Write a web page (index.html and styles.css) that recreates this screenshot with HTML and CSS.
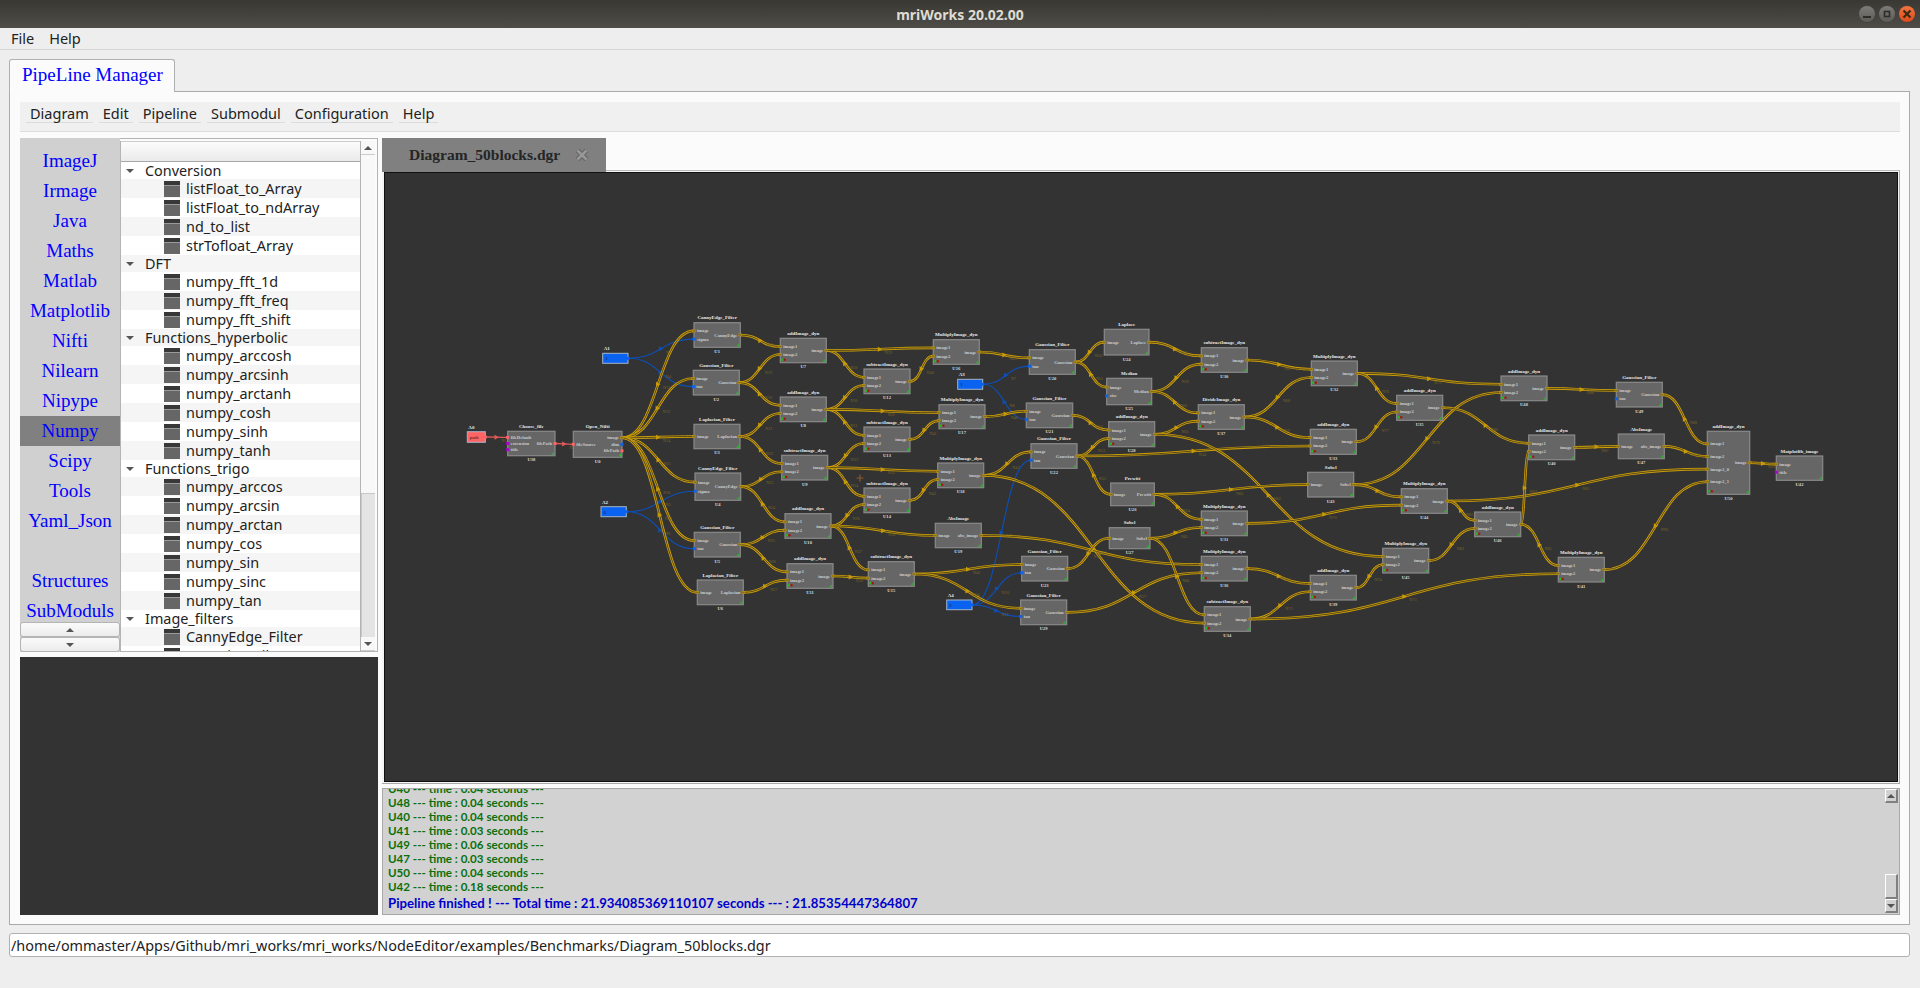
FILE: index.html
```html
<!DOCTYPE html>
<html lang="en">
<head>
    <meta charset="UTF-8">
    <title>mriWorks 20.02.00</title>
    <link rel="stylesheet" href="styles.css">
</head>
<body>
    <header class="titlebar">
        <div class="title">mriWorks 20.02.00</div>
        <div class="win-buttons">
            <span class="win-btn"><svg width="16" height="16" viewBox="0 0 16 16"><path d="M4 11h8" stroke="#2e2d2a" stroke-width="2"/></svg></span>
            <span class="win-btn"><svg width="16" height="16" viewBox="0 0 16 16"><rect x="5.5" y="5.5" width="5" height="5" fill="none" stroke="#2e2d2a" stroke-width="1.6"/></svg></span>
            <span class="win-btn win-close"><svg width="16" height="16" viewBox="0 0 16 16"><path d="M4.5 4.5l7 7M11.5 4.5l-7 7" stroke="#3a2a14" stroke-width="2.2"/></svg></span>
        </div>
    </header>
    <nav class="menubar">
        <span>File</span>
        <span>Help</span>
    </nav>

    <main class="workspace">
        <div class="tab-head">PipeLine Manager</div>
        <section class="tab-panel">
            <div class="toolbar">
                <span>Diagram</span>
                <span>Edit</span>
                <span>Pipeline</span>
                <span>Submodul</span>
                <span>Configuration</span>
                <span>Help</span>
            </div>
            <div class="split">
                <div class="left-col">
                    <div class="browser">
                        <div class="library">
                            <ul class="lib-list">
                                <li>ImageJ</li>
                                <li>Irmage</li>
                                <li>Java</li>
                                <li>Maths</li>
                                <li>Matlab</li>
                                <li>Matplotlib</li>
                                <li>Nifti</li>
                                <li>Nilearn</li>
                                <li>Nipype</li>
                                <li class="active">Numpy</li>
                                <li>Scipy</li>
                                <li>Tools</li>
                                <li>Yaml_Json</li>
                                <li></li>
                                <li>Structures</li>
                                <li>SubModuls</li>
                            </ul>
                            <button class="lib-btn"><i class="arrow-up"></i></button>
                            <button class="lib-btn"><i class="arrow-down"></i></button>
                        </div>
                        <div class="tree-frame">
                            <div class="tree">
                                <div class="tree-head"></div>
                                <ul class="tree-rows">
                                    <li class="cat"><i class="arrow-down"></i>Conversion</li>
                                    <li class="leaf"><i class="mod-icon"></i>listFloat_to_Array</li>
                                    <li class="leaf"><i class="mod-icon"></i>listFloat_to_ndArray</li>
                                    <li class="leaf"><i class="mod-icon"></i>nd_to_list</li>
                                    <li class="leaf"><i class="mod-icon"></i>strTofloat_Array</li>
                                    <li class="cat"><i class="arrow-down"></i>DFT</li>
                                    <li class="leaf"><i class="mod-icon"></i>numpy_fft_1d</li>
                                    <li class="leaf"><i class="mod-icon"></i>numpy_fft_freq</li>
                                    <li class="leaf"><i class="mod-icon"></i>numpy_fft_shift</li>
                                    <li class="cat"><i class="arrow-down"></i>Functions_hyperbolic</li>
                                    <li class="leaf"><i class="mod-icon"></i>numpy_arccosh</li>
                                    <li class="leaf"><i class="mod-icon"></i>numpy_arcsinh</li>
                                    <li class="leaf"><i class="mod-icon"></i>numpy_arctanh</li>
                                    <li class="leaf"><i class="mod-icon"></i>numpy_cosh</li>
                                    <li class="leaf"><i class="mod-icon"></i>numpy_sinh</li>
                                    <li class="leaf"><i class="mod-icon"></i>numpy_tanh</li>
                                    <li class="cat"><i class="arrow-down"></i>Functions_trigo</li>
                                    <li class="leaf"><i class="mod-icon"></i>numpy_arccos</li>
                                    <li class="leaf"><i class="mod-icon"></i>numpy_arcsin</li>
                                    <li class="leaf"><i class="mod-icon"></i>numpy_arctan</li>
                                    <li class="leaf"><i class="mod-icon"></i>numpy_cos</li>
                                    <li class="leaf"><i class="mod-icon"></i>numpy_sin</li>
                                    <li class="leaf"><i class="mod-icon"></i>numpy_sinc</li>
                                    <li class="leaf"><i class="mod-icon"></i>numpy_tan</li>
                                    <li class="cat"><i class="arrow-down"></i>Image_filters</li>
                                    <li class="leaf"><i class="mod-icon"></i>CannyEdge_Filter</li>
                                    <li class="leaf"><i class="mod-icon"></i>Gaussian_Filter</li>
                                </ul>
                            </div>
                            <div class="tree-scroll">
                                <div class="tree-scroll-end"><i class="arrow-up"></i></div>
                                <div class="tree-scroll-track"></div>
                                <div class="tree-scroll-thumb"></div>
                                <div class="tree-scroll-end"><i class="arrow-down"></i></div>
                            </div>
                        </div>
                    </div>
                    <div class="preview"></div>
                </div>

                <div class="right-col">
                    <div class="doc-tabs">
                        <div class="doc-tab">
                            <span>Diagram_50blocks.dgr</span>
                            <svg class="doc-close" width="14" height="14" viewBox="0 0 14 14"><path d="M2.5 2.5l9 9M11.5 2.5l-9 9" stroke="#666666" stroke-width="5"/><path d="M2.5 2.5l9 9M11.5 2.5l-9 9" stroke="#989898" stroke-width="2.5"/></svg>
                        </div>
                    </div>
                    <div class="canvas-frame">
                        <svg id="diagram" class="canvas" viewBox="384 172 1514 610" width="1514" height="610"></svg>
                    </div>
                    <div class="console">
                        <div class="console-text">
                            <p class="clipped">U40 --- time : 0.04 seconds ---</p>
                            <p>U48 --- time : 0.04 seconds ---</p>
                            <p>U40 --- time : 0.04 seconds ---</p>
                            <p>U41 --- time : 0.03 seconds ---</p>
                            <p>U49 --- time : 0.06 seconds ---</p>
                            <p>U47 --- time : 0.03 seconds ---</p>
                            <p>U50 --- time : 0.04 seconds ---</p>
                            <p>U42 --- time : 0.18 seconds ---</p>
                            <p class="finished">Pipeline finished ! --- Total time : 21.934085369110107 seconds --- : 21.85354447364807</p>
                        </div>
                        <div class="console-scroll">
                            <div class="bevel bevel-end"><i class="arrow-up"></i></div>
                            <div class="console-track"></div>
                            <div class="bevel bevel-thumb"></div>
                            <div class="bevel bevel-end"><i class="arrow-down"></i></div>
                        </div>
                    </div>
                </div>
            </div>
        </section>
        <input class="path-input" type="text" value="/home/ommaster/Apps/Github/mri_works/mri_works/NodeEditor/examples/Benchmarks/Diagram_50blocks.dgr">
    </main>
    <script src="diagram.js"></script>
</body>
</html>
```

FILE: styles.css
```css
* {
    box-sizing: border-box;
}
html, body {
    height: 100%;
}
body {
    margin: 0;
    font-family: 'Noto Sans', sans-serif;
    font-size: 14.5px;
    color: #222;
    background-color: #eeeeee;
    overflow: hidden;
}
ul {
    list-style: none;
    margin: 0;
    padding: 0;
}
p {
    margin: 0;
}

/* window chrome */
.titlebar {
    height: 28px;
    display: grid;
    grid-template-columns: 1fr auto 1fr;
    align-items: center;
    background: linear-gradient(#393832, #4e4c46);
}
.title {
    grid-column: 2;
    color: #dfdbd2;
    font-weight: 700;
    font-size: 14px;
}
.win-buttons {
    grid-column: 3;
    justify-self: end;
    display: flex;
    gap: 4px;
    padding-right: 5px;
}
.win-btn {
    width: 16px;
    height: 16px;
    border-radius: 50%;
    background: linear-gradient(#7d7c78, #5c5b56);
    box-shadow: 0 0 0 1px #44433e;
    display: block;
}
.win-btn svg {
    display: block;
}
.win-close {
    background: linear-gradient(#f4743e, #dc4a1c);
}
.menubar {
    height: 22px;
    display: flex;
    gap: 15px;
    align-items: center;
    padding-left: 11px;
    padding-bottom: 1px;
    border-bottom: 1px solid #d6d6d6;
}

.workspace {
    padding: 9px 10px 0 9px;
}
.tab-head {
    width: 166px;
    height: 33px;
    margin-bottom: -1px;
    position: relative;
    padding: 4px 0 0 12px;
    background-color: #fbfbfb;
    border: 1px solid #b0b0b0;
    border-bottom: none;
    border-radius: 3px 3px 0 0;
    font-family: 'Liberation Serif', serif;
    font-size: 19px;
    color: #0000ff;
}
.tab-panel {
    height: 834px;
    padding: 10px 9px 9px 10px;
    background-color: #fbfbfb;
    border: 1px solid #aaaaaa;
}
.toolbar {
    height: 30px;
    display: flex;
    gap: 6px;
    padding-left: 6px;
    margin-bottom: 6px;
    background-color: #f0f0f0;
    border-bottom: 1px solid #dddddd;
}
.toolbar span {
    height: 21px;
    line-height: 22px;
    padding: 0 4px;
    border-bottom: 1px solid #dcdcdc;
}

.split {
    display: flex;
    gap: 4px;
    height: 777px;
}
.left-col {
    width: 358px;
    display: flex;
    flex-direction: column;
    gap: 5px;
}
.browser {
    height: 514px;
    display: flex;
}
.library {
    width: 100px;
    display: flex;
    flex-direction: column;
    background-color: #d0d0d0;
}
.lib-list {
    flex: 1;
    min-height: 0;
    overflow: hidden;
    padding-top: 8px;
}
.lib-list li {
    height: 30px;
    line-height: 30px;
    text-align: center;
    font-family: 'Liberation Serif', serif;
    font-size: 19px;
    color: #0000ff;
}
.lib-list .active {
    background-color: #808080;
}
.lib-btn {
    height: 15px;
    padding: 0;
    display: flex;
    align-items: center;
    justify-content: center;
    background: linear-gradient(#fafafa, #ececec);
    border: 1px solid #b4b4b4;
    border-radius: 3px;
}
.arrow-up, .arrow-down {
    display: block;
    width: 0;
    height: 0;
    border-left: 4px solid transparent;
    border-right: 4px solid transparent;
}
.arrow-up {
    border-bottom: 4px solid #555;
}
.arrow-down {
    border-top: 4px solid #555;
}

.tree-frame {
    flex: 1;
    display: flex;
    padding: 2px 2px 0 0;
    border: 1px solid #b4b4b4;
    border-left: none;
}
.tree {
    flex: 1;
    min-width: 0;
    display: flex;
    flex-direction: column;
    overflow: hidden;
    border-left: 1px solid #b4b4b4;
    border-right: 1px solid #b4b4b4;
}
.tree-head {
    height: 21px;
    flex-shrink: 0;
    background: linear-gradient(#fcfcfc, #eaeaea);
    border-top: 1px solid #cccccc;
    border-bottom: 1px solid #a8a8a8;
}
.tree-rows li {
    display: flex;
    align-items: center;
    font-size: 14.4px;
    white-space: nowrap;
}
.tree-rows li:nth-child(odd) {
    background-color: #ffffff;
}
.tree-rows li:nth-child(even) {
    background-color: #f5f5f5;
}
.tree-rows .cat {
    height: 17px;
    padding-left: 5px;
}
.tree-rows .cat .arrow-down {
    margin-right: 11px;
}
.tree-rows .leaf {
    height: 19px;
    padding-left: 43px;
}
.mod-icon {
    width: 16px;
    height: 16px;
    margin-right: 6px;
    background: linear-gradient(#383838 0, #383838 4px, #9a9a9a 4px, #9a9a9a 5px, #666666 5px);
}
.tree-scroll {
    width: 14px;
    display: flex;
    flex-direction: column;
    background-color: #f8f8f8;
}
.tree-scroll-end {
    height: 14px;
    display: flex;
    align-items: center;
    justify-content: center;
    background-color: #f8f8f8;
    border-bottom: 1px solid #cccccc;
}
.tree-scroll-track {
    flex: 1;
}
.tree-scroll-thumb {
    height: 144px;
    background-color: #e4e4e4;
    border-top: 1px solid #c8c8c8;
    border-left: 1px solid #c8c8c8;
}
.preview {
    flex: 1;
    background-color: #333333;
}

.right-col {
    flex: 1;
    min-width: 0;
    display: flex;
    flex-direction: column;
}
.doc-tabs {
    height: 32px;
    flex-shrink: 0;
}
.doc-tab {
    width: 224px;
    height: 34px;
    position: relative;
    display: flex;
    align-items: center;
    gap: 15px;
    padding-left: 27px;
    background-color: #808080;
    font-family: 'Liberation Serif', serif;
    font-weight: 700;
    font-size: 15.5px;
    color: #252525;
}
.doc-close {
    display: block;
}
.canvas-frame {
    height: 614px;
    padding: 1px 1px 1px 2px;
    background-color: #f4f4f4;
    border-top: 1px solid #bbbbbb;
    border-right: 1px solid #aaaaaa;
    border-bottom: 1px solid #aaaaaa;
}
.canvas {
    display: block;
    background-color: #333333;
    outline: 1px solid #111;
    outline-offset: -1px;
}
.console {
    height: 127px;
    margin-top: 4px;
    display: flex;
    background-color: #d2d2d2;
    border: 1px solid #a8a8a8;
    overflow: hidden;
}
.console-text {
    flex: 1;
    margin-top: -7px;
    padding-left: 5px;
    font-family: 'Lato', sans-serif;
    font-weight: 700;
    font-size: 11.6px;
    color: #0b700b;
}
.console-text p {
    height: 14px;
    line-height: 14px;
}
.console-text .finished {
    height: 18px;
    line-height: 18px;
    font-size: 13.2px;
    color: #0000cc;
}
.console-scroll {
    width: 13px;
    margin: 0 1px 1px 0;
    display: flex;
    flex-direction: column;
}
.bevel {
    border-top: 1px solid #fff;
    border-left: 1px solid #fff;
    border-right: 2px solid #808080;
    border-bottom: 2px solid #808080;
}
.bevel-end {
    height: 14px;
    display: flex;
    align-items: center;
    justify-content: center;
}
.bevel-thumb {
    height: 25px;
}
.console-track {
    flex: 1;
}
.path-input {
    display: block;
    width: 100%;
    height: 24px;
    margin-top: 8px;
    padding: 0 1px;
    background-color: #fff;
    border: 1px solid #b0b0b0;
    border-radius: 3px;
    font-family: 'Noto Sans', sans-serif;
    font-size: 14.4px;
    color: #222;
}

/* diagram */
.n-box { fill: #666666; stroke: #8a8a8a; stroke-width: 1.2; }
.n-title { fill: #e8e8e8; font: 700 5px 'Liberation Serif', serif; text-anchor: middle; }
.n-id { fill: #d8d8d8; font: 700 4.6px 'Liberation Serif', serif; text-anchor: middle; }
.n-port { fill: #c8c8c8; font: 700 4.6px 'Liberation Serif', serif; }
.n-const-val { fill: #1a1a1a; font: 400 5px 'Liberation Serif', serif; }
.w-label { fill: #7c6824; font: 400 4.2px 'Liberation Serif', serif; }
.w-gold { fill: none; stroke: #d0a008; stroke-width: 2.6; }
.w-gold-in { fill: none; stroke: #4a3f1c; stroke-width: 0.9; }
.w-blue { fill: none; stroke: #0d4fb8; stroke-width: 1.1; }
.w-red { fill: none; stroke: #e05a5a; stroke-width: 1.3; }
```

FILE: diagram.js
```js
// nodes: id, title, x0, y0, x1, y1, inputs, outputs
const add = ['image1', 'image2'];
const nodes = [
    ['U38', 'Choose_file', 507.7, 431.3, 555, 455.7, ['fileDefault', 'extension', 'title'], ['filePath']],
    ['U0', 'Open_Nifti', 573.3, 431.3, 622, 457.3, ['fileSource'], ['image', 'dim', 'filePath']],
    ['U1', 'CannyEdge_Filter', 694, 322.7, 740.3, 347.3, ['image', 'sigma'], ['CannyEdge']],
    ['U2', 'Gaussian_Filter', 693.3, 370.3, 739.3, 395, ['image', 'tau'], ['Gaussian']],
    ['U3', 'Laplacian_Filter', 694, 424.3, 740, 448.7, ['image'], ['Laplacian']],
    ['U4', 'CannyEdge_Filter', 695, 473, 740.7, 500.3, ['image', 'sigma'], ['CannyEdge']],
    ['U5', 'Gaussian_Filter', 694.3, 532.3, 740.3, 557, ['image', 'tau'], ['Gaussian']],
    ['U6', 'Laplacian_Filter', 697.3, 580, 743.3, 604.7, ['image'], ['Laplacian']],
    ['U7', 'addImage_dyn', 780.3, 338.3, 826.3, 362.7, add, ['image']],
    ['U8', 'addImage_dyn', 780.3, 397, 826.3, 421.7, add, ['image']],
    ['U9', 'subtractImage_dyn', 781.7, 455.3, 827.7, 480, add, ['image']],
    ['U10', 'addImage_dyn', 785, 513.7, 831, 538.3, add, ['image']],
    ['U11', 'addImage_dyn', 787, 563.7, 833, 588.3, add, ['image']],
    ['U12', 'subtractImage_dyn', 864, 369, 910, 393.7, add, ['image']],
    ['U13', 'subtractImage_dyn', 864, 427, 910, 451.7, add, ['image']],
    ['U14', 'subtractImage_dyn', 864, 488, 910, 512.7, add, ['image']],
    ['U15', 'subtractImage_dyn', 868.3, 561.7, 914.3, 586.3, add, ['image']],
    ['U16', 'MultiplyImage_dyn', 933.3, 339.7, 979.3, 364.3, add, ['image']],
    ['U17', 'MultiplyImage_dyn', 939, 404.7, 985, 428.7, add, ['image']],
    ['U18', 'MultiplyImage_dyn', 937.7, 463, 983.7, 487.7, add, ['image']],
    ['U19', 'AbsImage', 935.3, 523.3, 981.3, 547.7, ['image'], ['abs_image']],
    ['U20', 'Gaussian_Filter', 1029.3, 349.7, 1075.3, 374.3, ['image', 'tau'], ['Gaussian']],
    ['U21', 'Gaussian_Filter', 1026.3, 403, 1072.7, 427.7, ['image', 'tau'], ['Gaussian']],
    ['U22', 'Gaussian_Filter', 1031, 443.7, 1077, 468.3, ['image', 'tau'], ['Gaussian']],
    ['U23', 'Gaussian_Filter', 1021.7, 556.3, 1067.7, 581, ['image', 'tau'], ['Gaussian']],
    ['U29', 'Gaussian_Filter', 1020.7, 600, 1066.7, 624.7, ['image', 'tau'], ['Gaussian']],
    ['U24', 'Laplace', 1104.3, 329.3, 1149, 355, ['image'], ['Laplace']],
    ['U25', 'Median', 1106.7, 378.3, 1151.7, 404.7, ['image', 'size'], ['Median']],
    ['U28', 'addImage_dyn', 1108.7, 421.7, 1154.7, 446.7, add, ['image']],
    ['U26', 'Prewitt', 1110.7, 483, 1154.3, 505.7, ['image'], ['Prewitt']],
    ['U27', 'Sobel', 1109.3, 527.7, 1150, 548.7, ['image'], ['Sobel']],
    ['U30', 'subtractImage_dyn', 1201.3, 347.7, 1247.3, 372.3, add, ['image']],
    ['U37', 'DivideImage_dyn', 1198.3, 404.7, 1244.3, 429.3, add, ['image']],
    ['U31', 'MultiplyImage_dyn', 1201.3, 511, 1247.3, 535.7, add, ['image']],
    ['U36', 'MultiplyImage_dyn', 1201.3, 556.3, 1247.3, 581, add, ['image']],
    ['U34', 'subtractImage_dyn', 1204.3, 606.7, 1250.3, 631.3, add, ['image']],
    ['U32', 'MultiplyImage_dyn', 1311.3, 361, 1357.3, 385.7, add, ['image']],
    ['U33', 'addImage_dyn', 1310.3, 429.3, 1356.3, 454.3, add, ['image']],
    ['U43', 'Sobel', 1307.7, 472.3, 1353.7, 497, ['image'], ['Sobel']],
    ['U39', 'addImage_dyn', 1310.3, 575.3, 1356.3, 600, add, ['image']],
    ['U35', 'addImage_dyn', 1396.7, 395.3, 1442.7, 420.3, add, ['image']],
    ['U48', 'addImage_dyn', 1501, 376, 1547, 400.7, add, ['image']],
    ['U49', 'Gaussian_Filter', 1616.3, 382.3, 1662.3, 407, ['image', 'tau'], ['Gaussian']],
    ['U40', 'addImage_dyn', 1528.7, 435, 1574.7, 459.7, add, ['image']],
    ['U47', 'AbsImage', 1618.3, 434, 1664.3, 458.7, ['image'], ['abs_image']],
    ['U44', 'MultiplyImage_dyn', 1401.3, 488.7, 1447.3, 513.3, add, ['image']],
    ['U46', 'addImage_dyn', 1474.7, 512, 1520.7, 536.7, add, ['image']],
    ['U45', 'MultiplyImage_dyn', 1382.7, 548.3, 1428.7, 573, add, ['image']],
    ['U41', 'MultiplyImage_dyn', 1558.3, 557.3, 1604.3, 582, add, ['image']],
    ['U50', 'addImage_dyn', 1707.3, 431.3, 1749.7, 494.3, ['image1', 'image2', 'image2_0', 'image2_1'], ['image']],
    ['U42', 'Matplotlib_image', 1776.3, 456, 1822.7, 480.3, ['image', 'title'], []],
];

// constants: id, value, x0, y0, x1, y1, fill
const constants = [
    ['A0', 'path', 467.3, 431.7, 485.3, 442.3, '#ff6464'],
    ['A1', '1', 602.7, 353.3, 628, 363.3, '#0a62f0'],
    ['A2', '6', 601, 506.7, 626.3, 516.7, '#0a62f0'],
    ['A3', '1', 957.7, 379.3, 982.7, 389.3, '#0a62f0'],
    ['A4', '2', 946.7, 600, 972, 609.7, '#0a62f0'],
];

// wires: from node (output index optional), to node, input index, kind
const wires = [
    ['A0', 'U38', 0, 'red'], ['U38', 'U0', 0, 'red'],
    ['A1', 'U1', 1, 'blue'], ['A1', 'U2', 1, 'blue'],
    ['A2', 'U4', 1, 'blue'], ['A2', 'U5', 1, 'blue'],
    ['A3', 'U20', 1, 'blue'], ['A3', 'U21', 1, 'blue'],
    ['A4', 'U22', 1, 'blue'], ['A4', 'U23', 1, 'blue'], ['A4', 'U29', 1, 'blue'],
    ['U0', 'U1', 0], ['U0', 'U2', 0], ['U0', 'U3', 0], ['U0', 'U4', 0], ['U0', 'U5', 0], ['U0', 'U6', 0],
    ['U1', 'U7', 0], ['U2', 'U7', 1], ['U2', 'U8', 0], ['U3', 'U8', 1], ['U3', 'U9', 0], ['U4', 'U9', 1],
    ['U4', 'U10', 0], ['U5', 'U10', 1], ['U5', 'U11', 0], ['U6', 'U11', 1],
    ['U7', 'U12', 0], ['U7', 'U16', 0], ['U8', 'U12', 1], ['U8', 'U13', 0], ['U8', 'U17', 0],
    ['U9', 'U13', 1], ['U9', 'U14', 0], ['U9', 'U18', 0], ['U10', 'U14', 1], ['U10', 'U15', 0], ['U10', 'U19', 0],
    ['U11', 'U15', 1], ['U12', 'U16', 1], ['U13', 'U17', 1], ['U14', 'U18', 1],
    ['U15', 'U23', 0], ['U15', 'U29', 0],
    ['U16', 'U20', 0], ['U17', 'U21', 0], ['U18', 'U22', 0], ['U18', 'U34', 1], ['U19', 'U36', 0],
    ['U20', 'U24', 0], ['U20', 'U25', 0], ['U21', 'U28', 0], ['U22', 'U28', 1], ['U22', 'U33', 1], ['U22', 'U26', 0],
    ['U23', 'U27', 0], ['U29', 'U36', 1],
    ['U24', 'U30', 0], ['U25', 'U30', 1], ['U25', 'U37', 0], ['U28', 'U37', 1], ['U28', 'U45', 0],
    ['U26', 'U43', 0], ['U26', 'U31', 0], ['U27', 'U31', 1], ['U27', 'U34', 0],
    ['U30', 'U32', 0], ['U37', 'U32', 1], ['U37', 'U33', 0], ['U31', 'U44', 1],
    ['U36', 'U39', 0], ['U34', 'U39', 1], ['U34', 'U41', 1], ['U39', 'U45', 1],
    ['U32', 'U48', 0], ['U32', 'U35', 0], ['U33', 'U35', 1], ['U43', 'U48', 1], ['U43', 'U44', 0],
    ['U35', 'U40', 0], ['U44', 'U50', 2], ['U44', 'U46', 0], ['U45', 'U46', 1],
    ['U46', 'U40', 1], ['U46', 'U41', 0], ['U48', 'U49', 0], ['U40', 'U47', 0],
    ['U49', 'U50', 0], ['U47', 'U50', 1], ['U41', 'U50', 3], ['U50', 'U42', 0],
];

const svg = document.getElementById('diagram');
const byId = {};
const SVG_NS = 'http://www.w3.org/2000/svg';

function el(tag, attrs, text) {
    const e = document.createElementNS(SVG_NS, tag);
    for (const k in attrs) e.setAttribute(k, attrs[k]);
    if (text !== undefined) e.textContent = text;
    svg.appendChild(e);
    return e;
}

function portY(y0, y1, i, n) {
    return y0 + (y1 - y0) * (i + 1) / (n + 1);
}

for (const [id, value, x0, y0, x1, y1] of constants) {
    byId[id] = { out: (y0 + y1) / 2, x1 };
}
for (const n of nodes) {
    byId[n[0]] = { x0: n[2], y0: n[3], x1: n[4], y1: n[5], inputs: n[6], outputs: n[7] };
}

// wires go under the blocks
wires.forEach(function (w, i) {
    const from = byId[w[0]];
    const to = byId[w[1]];
    const kind = w[3] || 'gold';
    const sx = from.x1;
    const sy = from.out !== undefined ? from.out : portY(from.y0, from.y1, 0, from.outputs.length);
    const ex = to.x0;
    const ey = portY(to.y0, to.y1, w[2], to.inputs.length);
    const mx = (ex - sx) / 2;
    const d = `M${sx} ${sy}C${sx + mx} ${sy} ${ex - mx} ${ey} ${ex} ${ey}`;
    el('path', { d: d, class: 'w-' + kind });
    if (kind === 'gold') el('path', { d: d, class: 'w-gold-in' });

    const cx = (sx + ex) / 2;
    const cy = (sy + ey) / 2;
    const colors = { gold: '#c89a08', blue: '#0d4fb8', red: '#e05a5a' };
    el('path', { d: `M${cx - 2} ${cy - 2.5}L${cx + 2.5} ${cy}L${cx - 2} ${cy + 2.5}Z`, fill: colors[kind] });
    el('text', { x: cx + 5, y: cy + 5, class: 'w-label' }, 'N' + (i + 1));
});

for (const [id, value, x0, y0, x1, y1, fill] of constants) {
    el('text', { x: x0 + 1, y: y0 - 3, class: 'n-title', 'text-anchor': 'start', style: 'text-anchor:start' }, id);
    el('rect', { x: x0, y: y0, width: x1 - x0, height: y1 - y0, fill: fill, stroke: '#a4b4c8', 'stroke-width': 1 });
    el('text', { x: x0 + 2.5, y: y0 + 7, class: 'n-const-val' }, value);
    el('rect', { x: x1 - 1.5, y: (y0 + y1) / 2 - 1.5, width: 3, height: 3, fill: fill });
}

for (const n of nodes) {
    const [id, title, x0, y0, x1, y1, inputs, outputs] = n;
    el('rect', { x: x0, y: y0, width: x1 - x0, height: y1 - y0, class: 'n-box' });
    el('text', { x: (x0 + x1) / 2, y: y0 - 3.5, class: 'n-title' }, title);
    el('text', { x: (x0 + x1) / 2, y: y1 + 5.5, class: 'n-id' }, id);

    inputs.forEach(function (name, i) {
        const y = portY(y0, y1, i, inputs.length);
        el('text', { x: x0 + 3, y: y + 1.5, class: 'n-port' }, name);
        drawPort(x0, y, name, id);
    });
    outputs.forEach(function (name, i) {
        const y = portY(y0, y1, i, outputs.length);
        el('text', { x: x1 - 3, y: y + 1.5, class: 'n-port', style: 'text-anchor:end' }, name);
        drawPort(x1, y, name, id);
    });

    if (inputs === add || id === 'U50') {
        el('circle', { cx: x0 + 2, cy: y1 - 3, r: 1.2, fill: '#19c219' });
        el('circle', { cx: x0 + 4.5, cy: y1 - 3, r: 1.2, fill: '#b01010' });
    }
    el('path', { d: `M${x1 - 1} ${y1 - 4}V${y1 - 1}H${x1 - 4}Z`, fill: '#2cb52c' });
}

function drawPort(x, y, name, id) {
    let color = '#b48a08';
    if (['sigma', 'tau', 'size', 'dim'].includes(name)) color = '#0a62f0';
    if (['extension', 'title'].includes(name)) color = '#b000d0';
    if (['fileDefault', 'filePath', 'fileSource'].includes(name)) color = '#ff6464';
    if (color === '#b48a08') {
        el('rect', { x: x - 1.5, y: y - 1, width: 3, height: 2, fill: '#8a6c10', stroke: '#c49a10', 'stroke-width': 0.5 });
    } else {
        el('rect', { x: x - 1.5, y: y - 1.5, width: 3, height: 3, fill: color });
    }
}

// the stray cursor mark on the canvas
el('path', { d: 'M860 474.5V481.5M856.5 478H863.5', stroke: '#8a5a2a', 'stroke-width': 1.2, fill: 'none' });
```
